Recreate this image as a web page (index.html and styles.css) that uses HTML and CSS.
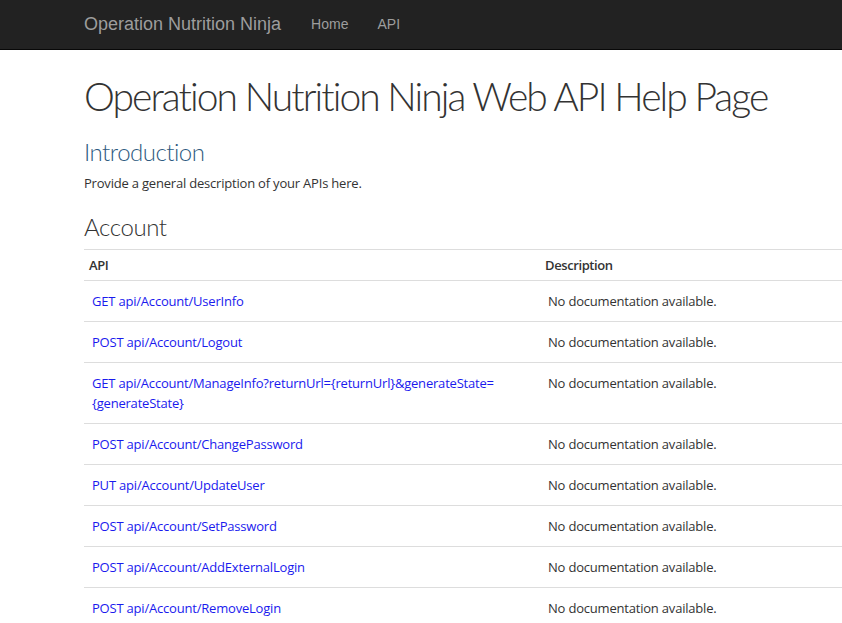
FILE: index.html
```html
<!DOCTYPE html>
<html lang="en">
<head>
<meta charset="utf-8">
<title>Help Page - Operation Nutrition Ninja</title>
<link rel="stylesheet" href="styles.css">
</head>
<body>
<header class="navbar">
  <a class="brand" href="#">Operation Nutrition Ninja</a>
  <nav class="nav">
    <a href="#">Home</a>
    <a href="#">API</a>
  </nav>
</header>
<main class="help-page">
  <h1 class="page-title">Operation Nutrition Ninja Web API Help Page</h1>
  <h2 class="intro-title">Introduction</h2>
  <p class="intro-text">Provide a general description of your APIs here.</p>
  <h2 class="group-title">Account</h2>
  <table class="api-table">
    <thead>
      <tr><th class="api-name">API</th><th class="api-doc">Description</th></tr>
    </thead>
    <tbody>
      <tr><td class="api-name"><a href="#">GET api/Account/UserInfo</a></td><td class="api-doc">No documentation available.</td></tr>
      <tr><td class="api-name"><a href="#">POST api/Account/Logout</a></td><td class="api-doc">No documentation available.</td></tr>
      <tr><td class="api-name"><a href="#">GET api/Account/ManageInfo?returnUrl={returnUrl}&amp;generateState=<wbr>{generateState}</a></td><td class="api-doc">No documentation available.</td></tr>
      <tr><td class="api-name"><a href="#">POST api/Account/ChangePassword</a></td><td class="api-doc">No documentation available.</td></tr>
      <tr><td class="api-name"><a href="#">PUT api/Account/UpdateUser</a></td><td class="api-doc">No documentation available.</td></tr>
      <tr><td class="api-name"><a href="#">POST api/Account/SetPassword</a></td><td class="api-doc">No documentation available.</td></tr>
      <tr><td class="api-name"><a href="#">POST api/Account/AddExternalLogin</a></td><td class="api-doc">No documentation available.</td></tr>
      <tr><td class="api-name"><a href="#">POST api/Account/RemoveLogin</a></td><td class="api-doc">No documentation available.</td></tr>
    </tbody>
  </table>
</main>
</body>
</html>
```
FILE: styles.css
```css
html, body {
  margin: 0;
  padding: 0;
  background: #fff;
  overflow: hidden;
}
body {
  font-family: "Open Sans", "Noto Sans", sans-serif;
  color: #333;
}
.navbar {
  display: flex;
  align-items: center;
  height: 48px;
  padding-bottom: 1px;
  background: #222;
  border-bottom: 1px solid #080808;
  padding-left: 84px;
  font-family: "Liberation Sans", Arial, sans-serif;
}
.brand {
  color: #9d9d9d;
  font-size: 18px;
  line-height: 20px;
  text-decoration: none;
  margin-right: 15px;
}
.nav {
  display: flex;
}
.nav a {
  color: #9d9d9d;
  font-size: 14px;
  line-height: 20px;
  padding: 0 14px 0 15px;
  text-decoration: none;
}
.help-page {
  padding-left: 84px;
}
.page-title {
  margin: 20px 0 0;
  font-family: Lato, "Open Sans", sans-serif;
  font-size: 39px;
  line-height: 52px;
  font-weight: 300;
  letter-spacing: -1.95px;
  color: #333;
  white-space: nowrap;
}
.intro-title {
  margin: 15px 0 0;
  font-family: Lato, "Open Sans", sans-serif;
  font-size: 24px;
  line-height: 30px;
  font-weight: 300;
  letter-spacing: -0.5px;
  color: #2e5a80;
}
.intro-text {
  margin: 6px 0 0;
  font-size: 13px;
  line-height: 20px;
  letter-spacing: -0.2px;
}
.group-title {
  margin: 19px 0 0;
  font-family: Lato, "Open Sans", sans-serif;
  font-size: 24px;
  line-height: 30px;
  font-weight: 300;
  letter-spacing: -0.4px;
  color: #333;
}
.api-table {
  margin-top: 7px;
  width: 100%;
  border-collapse: collapse;
  font-size: 13px;
  line-height: 20px;
  letter-spacing: -0.2px;
}
.api-table th {
  text-align: left;
  font-weight: 600;
  padding: 5px 5px;
  border-top: 1px solid #ddd;
  border-bottom: 1px solid #ddd;
  vertical-align: top;
  letter-spacing: -0.4px;
}
.api-table td {
  padding: 10px 8px;
  border-top: 1px solid #ddd;
  vertical-align: top;
}
.api-table .api-name {
  width: 440px;
}
.api-table a {
  color: #1a1aee;
  text-decoration: none;
}
```
